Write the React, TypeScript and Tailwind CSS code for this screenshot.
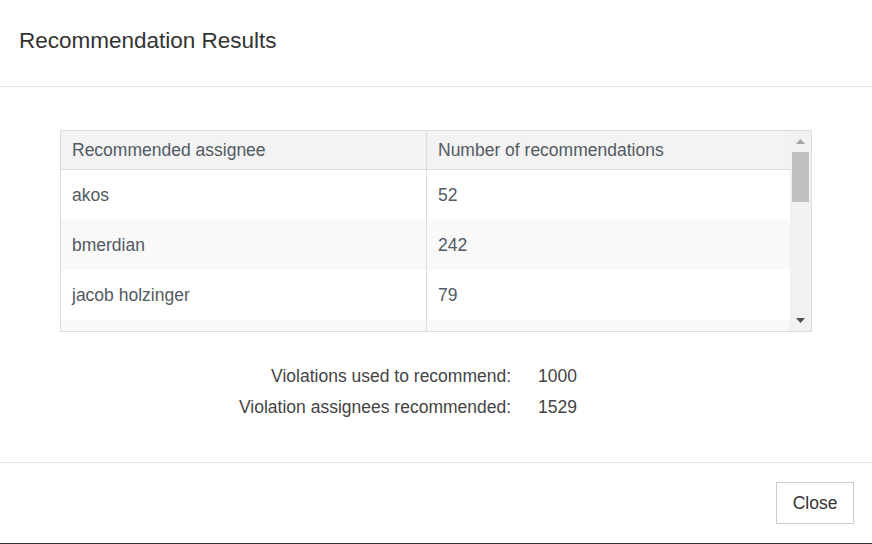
const rows = [
  { name: 'akos', count: '52' },
  { name: 'bmerdian', count: '242' },
  { name: 'jacob holzinger', count: '79' },
  // next row is only partly visible above the fold
  { name: '', count: '' },
];

const stats = [
  { label: 'Violations used to recommend:', value: 1000 },
  { label: 'Violation assignees recommended:', value: 1529 },
];

export default function App() {
  return (
    <div className="w-[872px] h-[544px] bg-white flex flex-col text-[#333] font-['Liberation_Sans',Arial,sans-serif] overflow-hidden">
      {/* Header */}
      <div className="h-[87px] shrink-0 border-b border-[#e5e5e5] flex items-center px-[19px]">
        <h1 className="text-[22.5px] leading-none text-[#333] -mt-[4px]">
          Recommendation Results
        </h1>
      </div>

      {/* Body */}
      <div className="pt-[43px] pb-[39px] px-[60px] shrink-0">
        <div className="h-[202px] border border-[#dcdcdc] flex">
          <div className="flex-1 overflow-hidden text-[17.5px] text-[#525a62]">
            <div className="h-[39px] flex bg-[#f3f3f3] border-b border-[#dcdcdc]">
              <div className="w-[366px] border-r border-[#dcdcdc] pl-[11px] flex items-center">
                Recommended assignee
              </div>
              <div className="flex-1 pl-[11px] flex items-center">
                Number of recommendations
              </div>
            </div>
            {rows.map((r, i) => (
              <div
                key={i}
                className={`h-[50px] flex ${i % 2 === 1 ? 'bg-[#f9f9f9]' : 'bg-white'}`}>
                <div className="w-[366px] border-r border-[#dcdcdc] pl-[11px] flex items-center">
                  {r.name}
                </div>
                <div className="flex-1 pl-[11px] flex items-center">{r.count}</div>
              </div>
            ))}
          </div>

          {/* Scrollbar */}
          <div className="w-[21px] shrink-0 bg-[#f1f1f1] flex flex-col items-center">
            <div className="h-[21px] w-full flex items-center justify-center">
              <svg width="9" height="5" viewBox="0 0 9 5">
                <path d="M0 5 L4.5 0 L9 5 Z" fill="#a3a3a3" />
              </svg>
            </div>
            <div className="w-[17px] h-[50px] bg-[#c1c1c1] self-start ml-[2px]" />
            <div className="flex-1" />
            <div className="h-[21px] w-full flex items-center justify-center">
              <svg width="9" height="5" viewBox="0 0 9 5">
                <path d="M0 0 L9 0 L4.5 5 Z" fill="#505050" />
              </svg>
            </div>
          </div>
        </div>

        {/* Stats */}
        <div className="mt-[29px] flex justify-center text-[17.5px] text-[#444]">
          <div className="grid grid-cols-[auto_auto] gap-x-[27px] pr-[56px]">
            {stats.map((s) => (
              <div key={s.label} className="contents">
                <div className="text-right leading-[31px]">{s.label}</div>
                <div className="leading-[31px]">{s.value}</div>
              </div>
            ))}
          </div>
        </div>
      </div>

      {/* Footer */}
      <div className="flex-1 border-t border-[#e5e5e5] flex justify-end items-start pt-[19px] pr-[18px]">
        <button className="h-[42px] w-[78px] border border-[#cccccc] bg-white text-[17.5px] text-[#333]">
          Close
        </button>
      </div>
      <div className="h-[1px] shrink-0 bg-[#333]" />
    </div>
  );
}
